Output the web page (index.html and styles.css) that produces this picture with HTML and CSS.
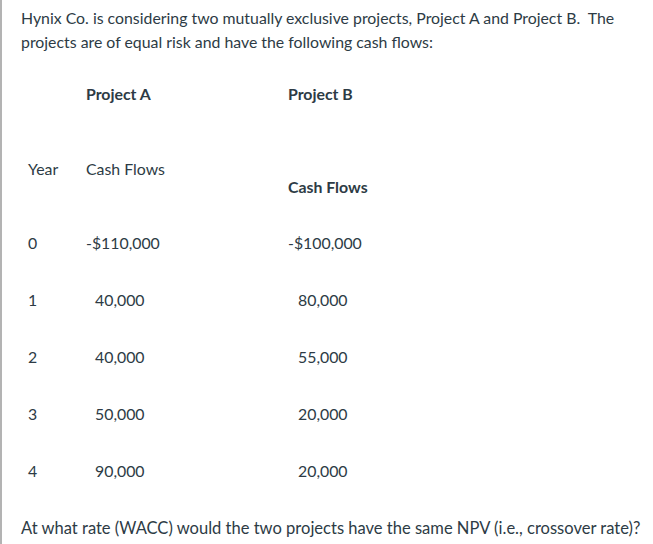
FILE: index.html
```html
<!DOCTYPE html>
<html>
<head>
<meta charset="utf-8">
<link rel="stylesheet" href="styles.css">
</head>
<body>
<div class="question">
  <p class="intro">Hynix Co. is considering two mutually exclusive projects, Project A and Project B.&nbsp; The projects are of equal risk and have the following cash flows:</p>
  <table class="flows">
    <tr class="r-head">
      <td class="c-year"></td>
      <td class="c-a"><strong>Project A</strong></td>
      <td class="c-b"><strong>Project B</strong></td>
    </tr>
    <tr class="r-sub">
      <td class="c-year">Year</td>
      <td class="c-a">Cash Flows</td>
      <td class="c-b"><strong class="lower">Cash Flows</strong></td>
    </tr>
    <tr class="r-data">
      <td class="c-year">0</td>
      <td class="c-a">-$110,000</td>
      <td class="c-b">-$100,000</td>
    </tr>
    <tr class="r-data">
      <td class="c-year">1</td>
      <td class="c-a num">40,000</td>
      <td class="c-b num">80,000</td>
    </tr>
    <tr class="r-data">
      <td class="c-year">2</td>
      <td class="c-a num">40,000</td>
      <td class="c-b num">55,000</td>
    </tr>
    <tr class="r-data">
      <td class="c-year">3</td>
      <td class="c-a num">50,000</td>
      <td class="c-b num">20,000</td>
    </tr>
    <tr class="r-last">
      <td class="c-year">4</td>
      <td class="c-a num">90,000</td>
      <td class="c-b num">20,000</td>
    </tr>
  </table>
  <p class="ask">At what rate (WACC) would the two projects have the same NPV (i.e., crossover rate)?</p>
</div>
</body>
</html>
```

FILE: styles.css
```css
html, body {
  margin: 0;
  padding: 0;
  background: #ffffff;
}

body {
  font-family: Lato, "Liberation Sans", sans-serif;
  font-size: 15.85px;
  line-height: 24px;
  color: #2d3b45;
}

.question {
  min-height: 544px;
  box-sizing: border-box;
  border-left: 2px solid #b3b3b3;
  padding: 6px 10px 0 19px;
}

.intro {
  margin: 0;
}

.flows {
  margin-top: 28px;
  border-collapse: collapse;
  border-spacing: 0;
  table-layout: fixed;
  width: 420px;
}

.flows td {
  box-sizing: border-box;
  padding: 0 0 0 7px;
  vertical-align: top;
  text-align: left;
  white-space: nowrap;
}

.flows strong {
  font-weight: 700;
}

.c-year {
  width: 58px;
}

.c-a {
  width: 202px;
}

.c-b {
  width: 160px;
}

.num.c-a {
  padding-left: 16px;
}

.num.c-b {
  padding-left: 17px;
}

.r-head td {
  height: 75px;
}

.r-sub td {
  height: 74px;
}

.r-data td {
  height: 57px;
}

.r-last td {
  height: 57px;
}

.lower {
  display: block;
  padding-top: 18px;
}

.ask {
  margin: 0;
  font-size: 16.55px;
  white-space: nowrap;
}
```
